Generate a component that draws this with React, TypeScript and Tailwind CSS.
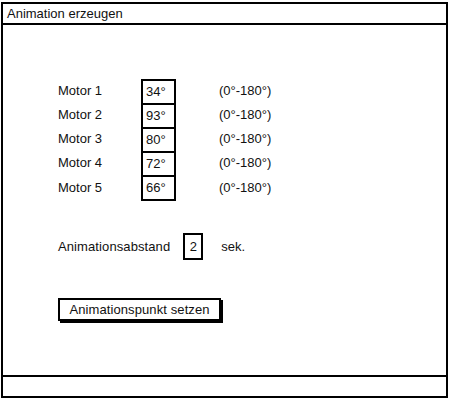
const font = { fontFamily: '"Liberation Sans", Arial, sans-serif' };

const motors = [
  { name: 'Motor 1', value: '34°' },
  { name: 'Motor 2', value: '93°' },
  { name: 'Motor 3', value: '80°' },
  { name: 'Motor 4', value: '72°' },
  { name: 'Motor 5', value: '66°' },
];

export default function App() {
  return (
    <div className="w-[450px] h-[400px] bg-white pt-[2px] pl-[1px] text-[13px] text-[#111]" style={font}>
      <div className="w-[447px] h-[396px] border-2 border-black flex flex-col">
        {/* Title bar */}
        <div className="h-[21px] border-b-2 border-black pl-[4px] flex items-center leading-none">
          Animation erzeugen
        </div>

        {/* Body */}
        <div className="flex-1 pl-[55px] pt-[54px]">
          <div className="flex flex-col">
            {motors.map((m, i) => (
              <div key={m.name} className={`flex items-center ${i === motors.length - 1 ? 'h-[26px]' : 'h-[24px]'}`}>
                <span className="w-[83px]">{m.name}</span>
                <div
                  className={`w-[35px] h-full border-x-2 border-t-2 border-black pl-[3px] flex items-center ${
                    i === motors.length - 1 ? 'border-b-2' : ''
                  }`}
                >
                  {m.value}
                </div>
                <span className="ml-[43px]">(0°-180°)</span>
              </div>
            ))}
          </div>

          <div className="flex items-center mt-[32px] h-[27px]">
            <span className="tracking-[0.1px]">Animationsabstand</span>
            <div className="ml-[13px] w-[20px] h-full border-2 border-black flex items-center justify-center">2</div>
            <span className="ml-[18px]">sek.</span>
          </div>

          <button
            className="mt-[38px] w-[163px] h-[23px] border-2 border-black shadow-[2px_2px_0_#000] flex items-center justify-center bg-white tracking-[0.1px]"
            style={font}
          >
            Animationspunkt setzen
          </button>
        </div>

        {/* Footer */}
        <div className="h-[21px] border-t-2 border-black" />
      </div>
    </div>
  );
}
